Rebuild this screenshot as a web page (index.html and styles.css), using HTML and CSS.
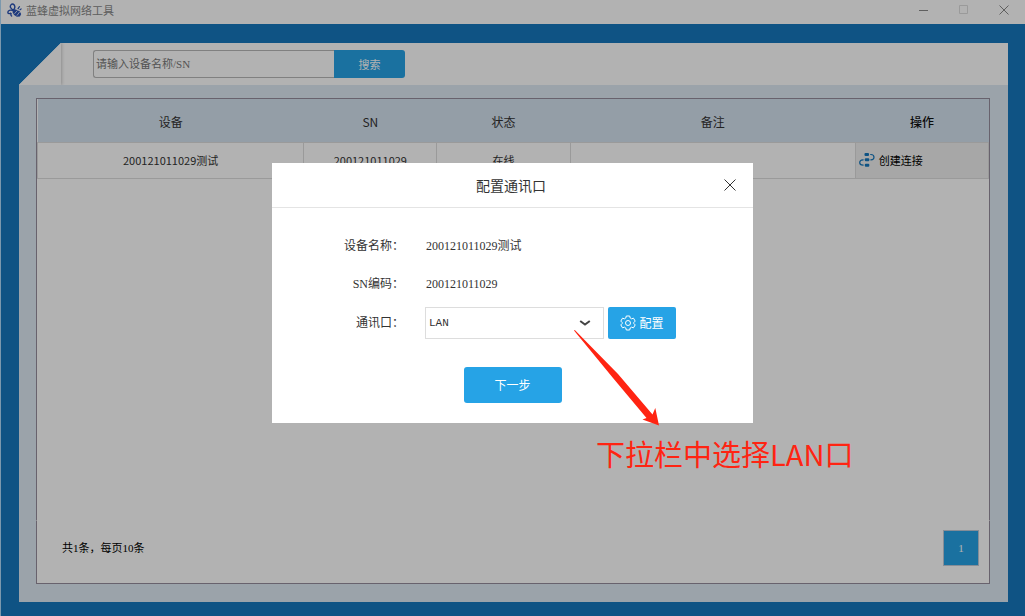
FILE: index.html
```html
<!DOCTYPE html>
<html lang="zh-CN">
<head>
<meta charset="utf-8">
<meta name="viewport" content="width=device-width, initial-scale=1">
<title>蓝蜂虚拟网络工具</title>
<link rel="stylesheet" href="styles.css">
</head>
<body>
<div class="window">
  <header class="titlebar">
    <svg class="logo" viewBox="0 0 16 16" aria-hidden="true">
      <g fill="none" stroke="#2a52b4" stroke-width="1.500">
        <path d="M6.800 7.500C3.600 6 2.800 3.600 4.200 2c1.500-1.600 4-.8 4.200 2 .1 1.400-.6 2.600-1.600 3.500z"/>
        <path d="M6.500 8C3.500 7 1 8 .9 9.800c0 1.700 2 2 3.600.9"/>
        <path d="M4.500 10.800c-.8 1.500-.3 3.200 1 3.400"/>
      </g>
      <path fill="#2a52b4" d="M7 6.500l3 .6 3.500 1.600 1.600 3-1.300 2.600-3.300.4-3-2-1.700-3z"/>
      <path d="M8 11.500l3-3.500M10.500 13.500l3-4" stroke="#fff" stroke-width=".8"/>
      <path d="M11.500 6.500l2-3M13.500 7.500l2-1.500" stroke="#2a52b4" stroke-width="1.300"/>
    </svg>
    <h1 class="titlebar-text">蓝蜂虚拟网络工具</h1>
    <div class="window-controls">
      <button class="window-button" type="button" aria-label="最小化"><svg viewBox="0 0 10 10"><path d="M0 5.500h9"/></svg></button>
      <button class="window-button window-button-off" type="button" aria-label="最大化" disabled><svg viewBox="0 0 10 10"><path d="M.5.5h8v8h-8z"/></svg></button>
      <button class="window-button" type="button" aria-label="关闭"><svg viewBox="0 0 10 10"><path d="M.5.5l9 9M9.500.5l-9 9"/></svg></button>
    </div>
  </header>

  <main class="frame">
    <div class="panel">
      <form class="toolbar">
        <div class="fold"></div>
        <div class="search">
          <input class="search-input" type="text" placeholder="请输入设备名称/SN" aria-label="请输入设备名称/SN">
          <button class="search-button" type="button">搜索</button>
        </div>
      </form>
      <div class="content">
        <section class="list">
          <table class="devices">
            <colgroup><col class="col-device"><col class="col-small"><col class="col-small"><col class="col-note"><col class="col-small"></colgroup>
            <thead>
              <tr><th>设备</th><th>SN</th><th>状态</th><th>备注</th><th class="strong">操作</th></tr>
            </thead>
            <tbody>
              <tr>
                <td>200121011029测试</td>
                <td>200121011029</td>
                <td>在线</td>
                <td></td>
                <td class="action-cell">
                  <button class="connect" type="button">
                    <svg viewBox="0 0 16 16" aria-hidden="true">
                      <g fill="none" stroke="#1678bd" stroke-width="1.200">
                        <path d="M11.200 2.500h.8c4 .2 4 5.100 0 5.300h-.6"/>
                        <path d="M4.600 7.800H4c-4.400.2-4.400 5.200 0 5.400h.6"/>
                      </g>
                      <g fill="#1678bd">
                        <rect x="5.500" y="1" width="4.500" height="3" rx="1"/>
                        <rect x="5.800" y="6.300" width="4.500" height="3" rx="1"/>
                        <rect x="5.800" y="11.700" width="4.500" height="3" rx="1"/>
                      </g>
                    </svg>
                    创建连接
                  </button>
                </td>
              </tr>
            </tbody>
          </table>
        </section>
        <footer class="pager">
          <span>共1条，每页10条</span>
          <button class="page" type="button">1</button>
        </footer>
      </div>
    </div>
  </main>

  <div class="overlay">
    <div class="modal" role="dialog" aria-labelledby="modal-title">
      <div class="modal-head">
        <h2 class="modal-title" id="modal-title">配置通讯口</h2>
        <button class="modal-close" type="button" aria-label="关闭"><svg viewBox="0 0 12 12"><path d="M.5.5l11 11M11.500.5l-11 11"/></svg></button>
      </div>
      <form class="modal-body">
        <dl class="field">
          <dt class="field-label">设备名称：</dt>
          <dd class="field-value">200121011029测试</dd>
        </dl>
        <dl class="field">
          <dt class="field-label">SN编码：</dt>
          <dd class="field-value">200121011029</dd>
        </dl>
        <div class="field field-port">
          <label class="field-label" for="port">通讯口：</label>
          <div class="port">
            <div class="select-box">
              <select class="select" id="port"><option>LAN</option></select>
              <svg class="chevron" viewBox="0 0 12 6" aria-hidden="true"><path d="M1.200 1L6 4.500 10.800 1"/></svg>
            </div>
            <button class="configure" type="button">
              <svg viewBox="0 0 16 16" aria-hidden="true">
                <path d="M6.300 1h3.400l.5 2 1.300.8 2-.6 1.700 2.900L13.800 7.500v1l1.400 1.400-1.700 2.900-2-.6-1.300.8-.5 2H6.300l-.5-2-1.300-.8-2 .6L.8 9.900l1.400-1.400v-1L.8 6.100l1.700-2.900 2 .6L5.800 3z"/>
                <circle cx="8" cy="8" r="2.500"/>
              </svg>
              配置
            </button>
          </div>
        </div>
        <button class="next" type="button">下一步</button>
      </form>
      <svg class="arrow" viewBox="0 0 86 97" aria-hidden="true"><path d="M0 .5L.8 0 44 44l34.500 40.500 2.800-6.500L85 95.500 68.500 89.500l4-1.500L39 48z"/></svg>
      <p class="hint">下拉栏中选择LAN口</p>
    </div>
  </div>
</div>
</body>
</html>
```

FILE: styles.css
```css
* {
  box-sizing: border-box;
}

body {
  margin: 0;
  color: #333;
  font: 11px/16px "Noto Sans CJK SC", sans-serif;
}

button,
input,
select {
  margin: 0;
  padding: 0;
  border: 0;
  background: none;
  color: inherit;
  font: inherit;
}

button {
  cursor: pointer;
}

.window {
  position: relative;
  display: flex;
  flex-direction: column;
  min-height: 100vh;
  overflow: hidden;
  border-left: 1px solid #7b98ad;
  background: #1678bd;
}

.titlebar {
  display: flex;
  align-items: center;
  height: 24px;
  padding: 0 16px 4px 6px;
  background: #fff;
}

.logo {
  width: 15px;
  height: 15px;
  margin-right: 4px;
}

.titlebar-text {
  margin: 0;
  color: #888;
  font-size: 11px;
  font-weight: 400;
}

.window-controls {
  display: flex;
  gap: 30px;
  margin-left: auto;
}

.window-button {
  width: 10px;
  height: 10px;
}

.window-button svg {
  display: block;
  fill: none;
  stroke: #888;
}

.window-button-off svg {
  stroke: #ddd;
}

.frame {
  display: flex;
  flex: 1;
  padding: 19px 17px 14px 18px;
}

.panel {
  display: flex;
  flex: 1;
  flex-direction: column;
  background: #dfeaf4;
  clip-path: polygon(42px 0, 100% 0, 100% 100%, 0 100%, 0 42px);
}

.toolbar {
  display: flex;
  align-items: center;
  height: 42px;
  overflow: hidden;
  background: #fff;
}

.fold {
  width: 42px;
  height: 42px;
  background: #fdfdfd;
  box-shadow: 1px 0 3px #ccc;
}

.search {
  display: flex;
  width: 312px;
  height: 28px;
  margin-left: 32px;
}

.search-input {
  flex: 1;
  min-width: 0;
  padding: 0 2px;
  border: 1px solid #b8b8b8;
  border-right: 0;
  border-radius: 3px 0 0 3px;
  font-family: "Liberation Serif", "Noto Sans CJK SC", serif;
}

.search-input::placeholder {
  color: #777;
  opacity: 1;
}

.search-button {
  width: 71px;
  border-radius: 0 3px 3px 0;
  background: #26a3e6;
  color: #fff;
}

.content {
  display: flex;
  flex: 1;
  flex-direction: column;
  padding: 13px 18px 18px 17px;
}

.list {
  flex: 1;
  border: 1px solid #958d9c;
  border-bottom-color: #fff;
  background: #fff;
}

.devices {
  width: 100%;
  border-collapse: collapse;
  table-layout: fixed;
  text-align: center;
}

.col-device {
  width: 28%;
}

.col-small {
  width: 14%;
}

.col-note {
  width: 30%;
}

.devices th {
  height: 43px;
  padding: 3px 0 0;
  background: #d5e2ef;
  font-size: 12px;
  font-weight: 400;
}

.devices .strong {
  color: #111;
  font-weight: 500;
}

.devices td {
  height: 36px;
  padding: 0;
  border: 1px solid #ddd;
}

.devices .action-cell {
  background: #efefef;
  text-align: left;
}

.connect {
  display: flex;
  align-items: center;
  gap: 4px;
  padding-left: 3px;
  color: #000;
}

.connect svg {
  width: 16px;
  height: 16px;
}

.pager {
  display: flex;
  align-items: center;
  justify-content: space-between;
  height: 63px;
  padding: 0 10px 8px 25px;
  border: 1px solid #958d9c;
  border-top: 0;
  background: #fff;
  color: #000;
  font-family: "Liberation Serif", "Noto Sans CJK SC", serif;
}

.page {
  width: 36px;
  height: 36px;
  border: 1px solid #bfcbd8;
  background: #26a3e6;
  color: #fff;
}

.overlay {
  position: absolute;
  inset: 0 0 0 -1px;
  display: flex;
  align-items: flex-start;
  justify-content: center;
  padding-top: 163px;
  background: rgba(0, 0, 0, 0.3);
}

.modal {
  position: relative;
  width: 481px;
  background: #fff;
}

.modal-head {
  display: flex;
  align-items: center;
  height: 45px;
  padding: 0 17px;
  border-bottom: 1px solid #e4e4e4;
}

.modal-title {
  flex: 1;
  margin: 0;
  padding-left: 9px;
  font-size: 14px;
  font-weight: 400;
  line-height: 20px;
  text-align: center;
}

.modal-close {
  width: 12px;
  height: 12px;
}

.modal-close svg {
  display: block;
  fill: none;
  stroke: #333;
}

.modal-body {
  display: flex;
  flex-direction: column;
  padding: 19px 0 20px;
  font-family: "Liberation Serif", "Noto Sans CJK SC", serif;
  font-size: 12px;
}

.field {
  display: grid;
  grid-template-columns: 132px 1fr;
  align-items: center;
  gap: 22px;
  height: 38px;
  margin: 0;
}

.field-port {
  height: 40px;
}

.field-label {
  text-align: right;
}

.field-value {
  margin: 0;
}

.port {
  display: flex;
  gap: 4px;
  margin-left: -1px;
}

.select-box {
  position: relative;
  width: 179px;
  height: 32px;
}

.select {
  width: 100%;
  height: 100%;
  padding: 0 3px;
  border: 1px solid #ddd;
  appearance: none;
  font-family: "Liberation Mono", monospace;
  font-size: 11px;
}

.chevron {
  position: absolute;
  top: 13px;
  right: 13px;
  width: 12px;
  height: 6px;
  fill: none;
  stroke: #444;
  stroke-width: 2;
  pointer-events: none;
}

.configure {
  display: flex;
  align-items: center;
  justify-content: center;
  gap: 3px;
  width: 68px;
  height: 32px;
  border-radius: 2px;
  background: #26a3e6;
  color: #fff;
  font-family: "Noto Sans CJK SC", sans-serif;
}

.configure svg {
  width: 16px;
  height: 16px;
  fill: none;
  stroke: #fff;
  stroke-linejoin: round;
}

.next {
  align-self: center;
  width: 98px;
  height: 36px;
  margin-top: 24px;
  border-radius: 3px;
  background: #26a3e6;
  color: #fff;
  font-family: "Noto Sans CJK SC", sans-serif;
}

.arrow {
  position: absolute;
  top: 167px;
  left: 302px;
  width: 86px;
  height: 97px;
  fill: #ff2412;
  pointer-events: none;
}

.hint {
  position: absolute;
  top: 270px;
  left: 324px;
  margin: 0;
  color: #ff2412;
  font-size: 29px;
  line-height: 40px;
  white-space: nowrap;
}
```
